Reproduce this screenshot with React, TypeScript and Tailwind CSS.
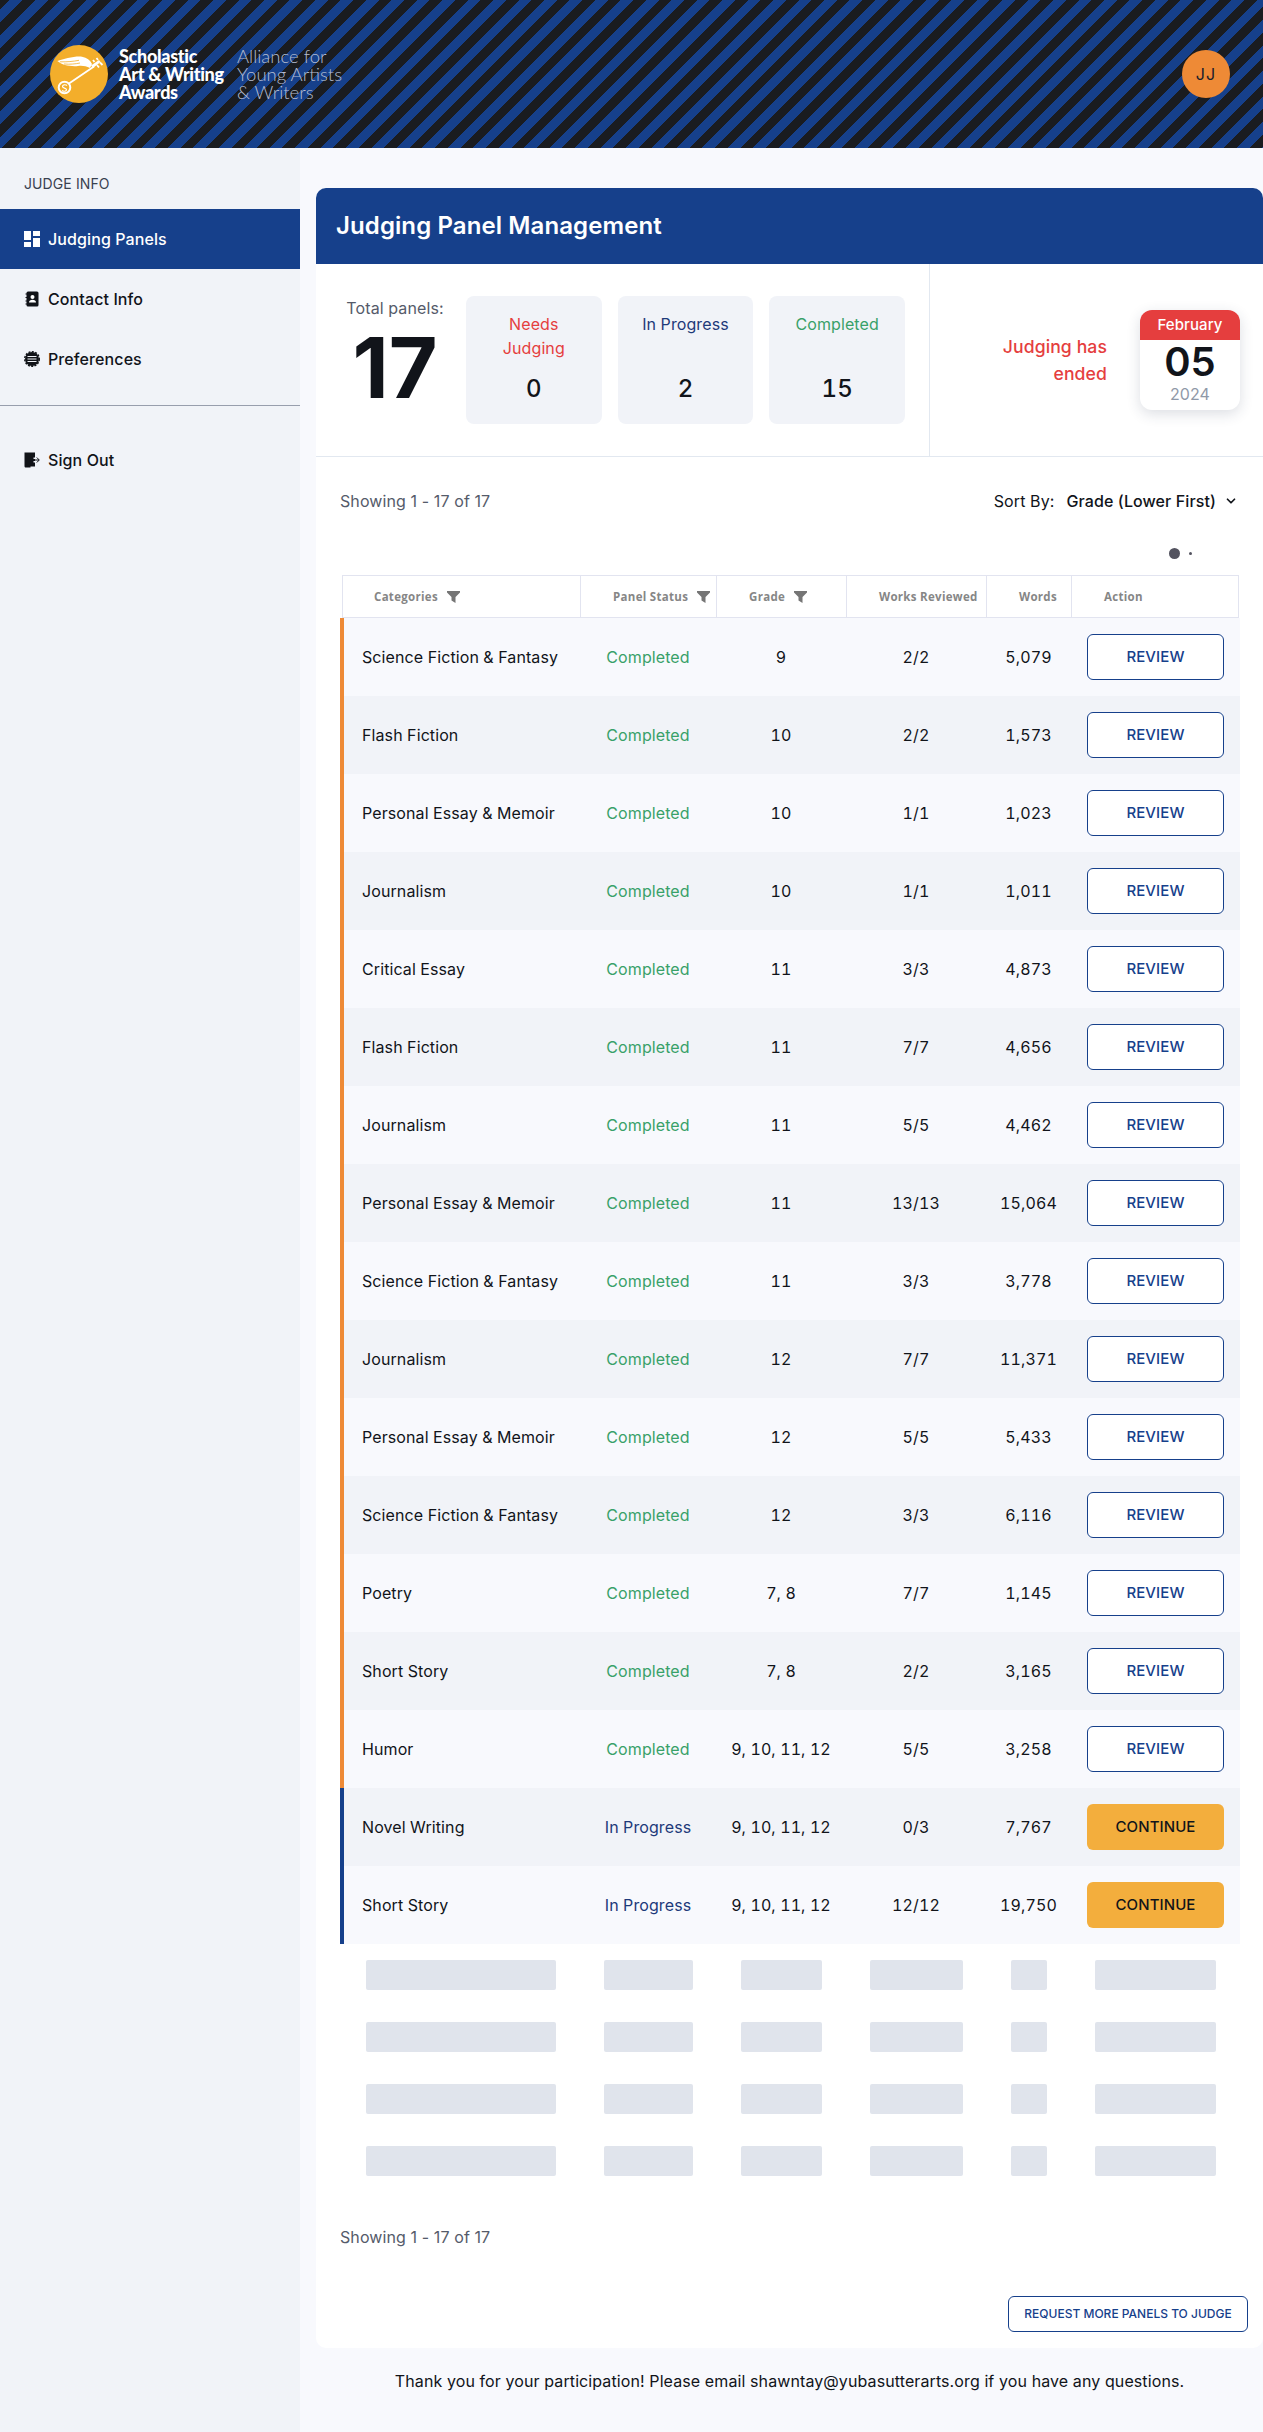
import React from "react";
import { ChevronDown } from "lucide-react";

const rows: [string, string, string, string, string][] = [
  ["Science Fiction & Fantasy", "Completed", "9", "2/2", "5,079"],
  ["Flash Fiction", "Completed", "10", "2/2", "1,573"],
  ["Personal Essay & Memoir", "Completed", "10", "1/1", "1,023"],
  ["Journalism", "Completed", "10", "1/1", "1,011"],
  ["Critical Essay", "Completed", "11", "3/3", "4,873"],
  ["Flash Fiction", "Completed", "11", "7/7", "4,656"],
  ["Journalism", "Completed", "11", "5/5", "4,462"],
  ["Personal Essay & Memoir", "Completed", "11", "13/13", "15,064"],
  ["Science Fiction & Fantasy", "Completed", "11", "3/3", "3,778"],
  ["Journalism", "Completed", "12", "7/7", "11,371"],
  ["Personal Essay & Memoir", "Completed", "12", "5/5", "5,433"],
  ["Science Fiction & Fantasy", "Completed", "12", "3/3", "6,116"],
  ["Poetry", "Completed", "7, 8", "7/7", "1,145"],
  ["Short Story", "Completed", "7, 8", "2/2", "3,165"],
  ["Humor", "Completed", "9, 10, 11, 12", "5/5", "3,258"],
  ["Novel Writing", "In Progress", "9, 10, 11, 12", "0/3", "7,767"],
  ["Short Story", "In Progress", "9, 10, 11, 12", "12/12", "19,750"],
];

function Logo() {
  return (
    <svg width="58" height="58" viewBox="0 0 58 58" className="shrink-0">
      <circle cx="29" cy="29" r="29" fill="#f3ae2b" />
      <circle cx="14.5" cy="42.5" r="5.8" fill="none" stroke="#fff" strokeWidth="2" />
      <path d="M17 40.5c-1.5-1.2-4.5-1-4.5 1 0 2 4 1.200 4 3.200 0 1.800-3 2-4.500.8" fill="none" stroke="#fff" strokeWidth="1.200" />
      <path d="M19 38.500 L44 21.500" stroke="#fff" strokeWidth="1.800" />
      <path d="M7.300 16 C14 14 24 11 32 11.700 C37 12.500 40 15 42 19 L40 23 C36 21 32 20.500 28 21 C24 21.500 19 21 15 20 C12 19 9 17.500 7.300 16Z" fill="#fff" />
      <path d="M10 16.800 C17 17 23 16.500 29 15.300 M14 19 C20 19.500 25 19 30 18" fill="none" stroke="#f3ae2b" strokeWidth="0.800" />
      <path d="M41 20.500 L49 15 L50.500 17 L43 23Z" fill="#fff" />
      <path d="M44.500 17 L43 15 M48 15 L46.500 13 M47 20 L49 22.500 M50 17.500 L52.500 20" stroke="#fff" strokeWidth="1.800" />
    </svg>
  );
}

function DashIcon() {
  return (
    <svg width="16" height="16" viewBox="0 0 16 16" className="shrink-0">
      <path d="M0 0h7v9H0z M0 11h7v5H0z M9 0h7v5H9z M9 7h7v9H9z" fill="#fff" />
    </svg>
  );
}

function ContactIcon() {
  return (
    <svg width="16" height="16" viewBox="0 0 16 16" className="shrink-0">
      <rect x="2.500" y="0.500" width="12" height="15" rx="1.500" fill="#111318" />
      <path d="M1.500 3h2M1.500 6.500h2M1.500 10h2M1.500 13h2" stroke="#111318" strokeWidth="1.200" />
      <circle cx="8.500" cy="6" r="2" fill="#fff" />
      <path d="M5 11.500c0-2 1.500-2.800 3.500-2.800s3.500.8 3.500 2.800z" fill="#fff" />
    </svg>
  );
}

function PrefIcon() {
  return (
    <svg width="16" height="16" viewBox="0 0 16 16" className="shrink-0">
      <circle cx="8" cy="8" r="7" fill="#111318" />
      <circle cx="8" cy="8" r="7.300" fill="none" stroke="#111318" strokeWidth="1.400" strokeDasharray="2 1.400" />
      <path d="M3.500 5.500h9M3.500 8h9M3.500 10.500h9" stroke="#f1f3f8" strokeWidth="1.200" />
    </svg>
  );
}

function SignOutIcon() {
  return (
    <svg width="16" height="16" viewBox="0 0 16 16" className="shrink-0">
      <path d="M0.500 0.500H11V5.500H9.500V7H11V9H9.500V10.500H11V14.500H6.500V15.500H2C1 15.500 0.500 15 0.500 14Z" fill="#111318" />
      <path d="M9 8h6M12.800 5.500 15.300 8 12.800 10.500" fill="none" stroke="#111318" strokeWidth="1" />
    </svg>
  );
}

function Filter() {
  return (
    <svg width="13" height="12" viewBox="0 0 13 12" className="ml-[9px] shrink-0">
      <path d="M0 0H13V1.500L8.500 6V12L4.500 9.500V6L0 1.500Z" fill="#757575" />
    </svg>
  );
}

function Th({ label, filter, className }: { label: string; filter?: boolean; className: string }) {
  return (
    <div className={`flex h-full items-center border-r border-[#e2e4f0] last:border-r-0 ${className}`}>
      <span className="text-[11.5px] font-bold tracking-[0.3px] text-[#868686] [font-family:'Open_Sans',sans-serif]">{label}</span>
      {filter && <Filter />}
    </div>
  );
}

const NavItem = ({ icon, label, active }: { icon: React.ReactNode; label: string; active?: boolean }) => (
  <div className={`flex h-[60px] items-center gap-2 pl-6 text-[16px] font-medium ${active ? "bg-[#16408b] text-white" : "text-[#11141a]"}`}>
    {icon}
    <span>{label}</span>
  </div>
);

function SkeletonRow() {
  return (
    <div className="grid h-[30px] grid-cols-[238px_136px_130px_140px_85px_168px] justify-items-center">
      <div className="h-full w-[190px] rounded-[2px] bg-[#e0e4ec]" />
      <div className="h-full w-[89px] rounded-[2px] bg-[#e0e4ec]" />
      <div className="h-full w-[81px] rounded-[2px] bg-[#e0e4ec]" />
      <div className="h-full w-[93px] rounded-[2px] bg-[#e0e4ec]" />
      <div className="h-full w-[36px] rounded-[2px] bg-[#e0e4ec]" />
      <div className="h-full w-[121px] rounded-[2px] bg-[#e0e4ec]" />
    </div>
  );
}

export default function App() {
  return (
    <div className="flex min-h-[2432px] flex-col bg-[#f8f9fd] tracking-[0.1px] text-[#11141a] [font-family:Inter,sans-serif]">
      <header className="flex h-[148px] items-center justify-between bg-[repeating-linear-gradient(135deg,#1a1c20_0,#1a1c20_7px,#16408b_7px,#16408b_16px,#1a1c20_16px,#1a1c20_18px)] pl-[50px] pr-[33px]">
        <div className="flex items-center">
          <Logo />
          <div className="ml-[11px] w-[118px] text-[18px] font-black leading-[18px] tracking-[-0.3px] text-white [font-family:Lato,sans-serif]">
            <div>Scholastic</div>
            <div className="whitespace-nowrap">Art &amp; Writing</div>
            <div>Awards</div>
          </div>
          <div className="text-[18.5px] font-light leading-[18px] tracking-normal text-[#b4bcd0] [font-family:Lato,sans-serif]">
            <div>Alliance for</div>
            <div className="whitespace-nowrap">Young Artists</div>
            <div>&amp; Writers</div>
          </div>
        </div>
        <div className="flex h-12 w-12 items-center justify-center rounded-full bg-[#ee8a36] text-[16px] tracking-[1px] text-[#1a202c]">JJ</div>
      </header>

      <div className="flex flex-1">
        <aside className="w-[300px] shrink-0 bg-[#f1f3f8]">
          <div className="flex h-[61px] items-center pl-6 pt-[9px] text-[14px] text-[#3a4150]">JUDGE INFO</div>
          <NavItem active icon={<DashIcon />} label="Judging Panels" />
          <NavItem icon={<ContactIcon />} label="Contact Info" />
          <NavItem icon={<PrefIcon />} label="Preferences" />
          <div className="mt-[16px] h-px bg-[#989ead]" />
          <div className="mt-[24px]">
            <NavItem icon={<SignOutIcon />} label="Sign Out" />
          </div>
        </aside>

        <main className="min-w-0 flex-1 pl-4 pt-10">
          <div className="overflow-hidden rounded-[10px] bg-white">
            <div className="flex h-[76px] items-center bg-[#16408b] pl-5 text-[24px] font-semibold text-white">Judging Panel Management</div>

            <div className="flex h-[193px] border-b border-[#e2e8f0]">
              <div className="flex w-[614px] border-r border-[#e2e8f0] pl-2 pt-8">
                <div className="flex w-[142px] flex-col items-center">
                  <div className="text-[16px] leading-6 text-[#555b6a]">Total panels:</div>
                  <div className="mt-[8px] text-[84px] font-bold leading-[80px] tracking-normal text-[#11141a]">17</div>
                </div>
                <div className="flex gap-[16px] tabular-nums">
                  {[
                    ["Needs Judging", "text-[#e53e3e]", "0"],
                    ["In Progress", "text-[#1e3a7a]", "2"],
                    ["Completed", "text-[#38a169]", "15"],
                  ].map(([l, c, n]) => (
                    <div key={l} className="flex h-[128px] w-[135.67px] flex-col items-center rounded-lg bg-[#f1f3f8] px-5 pt-4 text-center">
                      <div className={`h-12 text-[16px] leading-6 ${c}`}>{l}</div>
                      <div className="mt-[13px] text-[24px] font-medium leading-8">{n}</div>
                    </div>
                  ))}
                </div>
              </div>
              <div className="flex flex-1 items-center justify-end pr-[23px]">
                <div className="mr-[33px] w-[120px] text-right text-[17.6px] font-medium leading-[27px] text-[#e53e3e]">Judging has ended</div>
                <div className="h-[100px] w-[100px] overflow-hidden rounded-xl bg-white shadow-[0_4px_14px_rgba(40,50,80,0.16)]">
                  <div className="flex h-[30px] items-center justify-center bg-[#e53e3e] text-[15px] font-medium text-white">February</div>
                  <div className="text-center text-[40px] font-semibold leading-[44px] text-[#11141a]">05</div>
                  <div className="text-center text-[16px] leading-[20px] text-[#8f99a8]">2024</div>
                </div>
              </div>
            </div>

            <div className="px-6">
              <div className="flex h-[87px] items-center justify-between">
                <div className="text-[16px] text-[#555b6a]">Showing 1 - 17 of 17</div>
                <div className="flex items-center pr-[1px] text-[16px]">
                  <span>Sort By:</span>
                  <span className="ml-3 font-medium">Grade (Lower First)</span>
                  <ChevronDown size={14} strokeWidth={3} className="ml-2" />
                </div>
              </div>
              <div className="relative h-[31px]">
                <span className="absolute left-[829px] top-[4px] h-[11px] w-[11px] rounded-full bg-[#53535f]" />
                <span className="absolute left-[849px] top-[8px] h-[3px] w-[3px] rounded-full bg-[#53535f]" />
              </div>

              <div className="ml-[2px] grid h-[43px] grid-cols-[238px_136px_130px_140px_85px_168px] border border-[#e2e4f0]">
                <Th label="Categories" filter className="pl-[31px]" />
                <Th label="Panel Status" filter className="pl-[32px]" />
                <Th label="Grade" filter className="pl-[32px]" />
                <Th label="Works Reviewed" className="pl-[32px]" />
                <Th label="Words" className="pl-[32px]" />
                <Th label="Action" className="pl-[32px]" />
              </div>

              <div className="w-[900px] tabular-nums">
                {rows.map((r, i) => {
                  const done = r[1] === "Completed";
                  return (
                    <div
                      key={i}
                      className={`grid h-[78px] grid-cols-[236px_136px_130px_140px_85px_169px] items-center border-l-4 text-[16px] ${done ? "border-[#ee8a36]" : "border-[#16408b]"} ${i % 2 ? "bg-[#f1f3f8]" : "bg-[#f8f9fd]"}`}
                    >
                      <div className="pl-[18px]">{r[0]}</div>
                      <div className={`text-center ${done ? "text-[#38a169]" : "text-[#1e3a7a]"}`}>{r[1]}</div>
                      <div className="text-center">{r[2]}</div>
                      <div className="text-center">{r[3]}</div>
                      <div className="text-center">{r[4]}</div>
                      <div className="pl-[16px]">
                        <div
                          className={`flex h-[46px] w-[137px] items-center justify-center rounded-md text-[15px] font-medium ${done ? "border border-[#16408b] bg-white text-[#16408b]" : "bg-[#f3ae3d] text-[#11141a]"}`}
                        >
                          {done ? "REVIEW" : "CONTINUE"}
                        </div>
                      </div>
                    </div>
                  );
                })}
              </div>

              <div className="ml-[2px] mt-[16px] flex flex-col gap-[32px]">
                <SkeletonRow />
                <SkeletonRow />
                <SkeletonRow />
                <SkeletonRow />
              </div>

              <div className="mt-[49px] text-[16px] leading-6 text-[#555b6a]">Showing 1 - 17 of 17</div>
            </div>

            <div className="flex justify-end pb-4 pr-[15px] pt-[47px]">
              <div className="flex h-9 w-[240px] items-center justify-center rounded-md border border-[#16408b] text-[12px] font-medium tracking-normal text-[#16408b]">REQUEST MORE PANELS TO JUDGE</div>
            </div>
          </div>

          <div className="pt-[21px] text-center text-[16px] leading-6">Thank you for your participation! Please email shawntay@yubasutterarts.org if you have any questions.</div>
        </main>
      </div>
    </div>
  );
}
